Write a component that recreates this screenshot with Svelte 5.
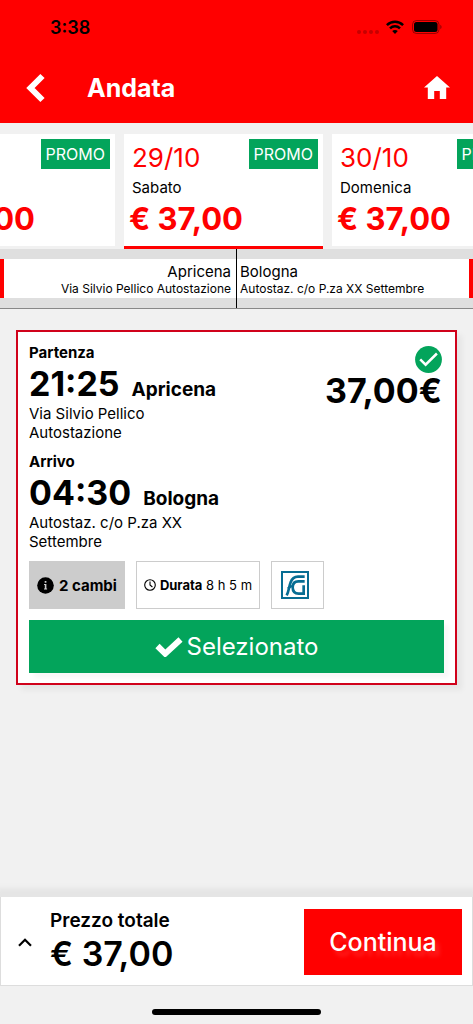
<script>
  import { onMount } from 'svelte';

  const days = [
    { date: '28/10', name: 'Venerdì', price: '€ 37,00' },
    { date: '29/10', name: 'Sabato', price: '€ 37,00', selected: true },
    { date: '30/10', name: 'Domenica', price: '€ 37,00' }
  ];

  const stops = [
    { label: 'Partenza', time: '21:25', city: 'Apricena', address: 'Via Silvio Pellico Autostazione' },
    { label: 'Arrivo', time: '04:30', city: 'Bologna', address: 'Autostaz. c/o P.za XX Settembre' }
  ];

  let strip;

  onMount(() => {
    strip.scrollLeft = 84;
  });
</script>

<div class="page">
  <header>
    <div class="status">
      <span class="clock">3:38</span>
      <svg class="signal" width="22" height="4" viewBox="0 0 22 4" aria-hidden="true">
        <g fill="#000" opacity=".22">
          <circle cx="2" cy="2" r="2" /><circle cx="8" cy="2" r="2" /><circle cx="14" cy="2" r="2" /><circle cx="20" cy="2" r="2" />
        </g>
      </svg>
      <svg class="wifi" width="18" height="14" viewBox="0 0 18 14" aria-hidden="true">
        <g fill="none" stroke="#000" stroke-width="2.5">
          <path d="M.9 5.1C5.5.6 12.5.6 17.1 5.1" />
          <path d="M4 8.3c2.8-2.7 7.2-2.7 10 0" />
        </g>
        <path d="M9 13.9 6.2 11c1.6-1.5 4-1.5 5.6 0z" />
      </svg>
      <svg class="battery" width="30" height="14" viewBox="0 0 30 14" aria-hidden="true">
        <rect x=".5" y=".5" width="26.5" height="13" rx="4" fill="none" stroke="#000" stroke-opacity=".4" />
        <rect x="2" y="2" width="23.5" height="10" rx="2.5" />
        <path d="M28.3 4.8c1.7.7 1.7 3.7 0 4.4z" opacity=".45" />
      </svg>
    </div>
    <div class="bar">
      <button class="icon" aria-label="Indietro">
        <svg width="20" height="30" viewBox="0 0 20 30"><path d="M16.5 3 4.5 15l12 12" fill="none" stroke="#fff" stroke-width="6" /></svg>
      </button>
      <h1>Andata</h1>
      <a class="icon" href="#home" aria-label="Home">
        <svg width="26" height="23" viewBox="0 0 26 23"><path d="M13 0 26 11.6h-3.8V23h-6.4v-8h-5.6v8H3.8V11.6H0z" fill="#fff" /></svg>
      </a>
    </div>
  </header>

  <nav class="days" bind:this={strip} aria-label="Date">
    {#each days as day}
      <button class="day" class:selected={day.selected} aria-pressed={!!day.selected}>
        <span class="dayhead"><span class="date">{day.date}</span><span class="promo">PROMO</span></span>
        <span class="name">{day.name}</span>
        <span class="price">{day.price}</span>
      </button>
    {/each}
  </nav>

  <section class="route">
    <div class="end from"><div><strong>Apricena</strong><span>Via Silvio Pellico Autostazione</span></div></div>
    <div class="end to"><div><strong>Bologna</strong><span>Autostaz. c/o P.za XX Settembre</span></div></div>
  </section>

  <main>
    <article>
      <div class="trip">
        <div class="stops">
          {#each stops as stop}
            <div class="stop">
              <h2>{stop.label}</h2>
              <div class="when"><span class="time">{stop.time}</span><span class="city">{stop.city}</span></div>
              <p>{stop.address}</p>
            </div>
          {/each}
        </div>
        <div class="fare">
          <svg width="27" height="27" viewBox="0 0 27 27" aria-hidden="true">
            <circle cx="13.5" cy="13.5" r="13.4" fill="#03a45b" />
            <path d="m5.2 13.3 5.4 5.4L21.9 7.5" fill="none" stroke="#fff" stroke-width="2.5" />
          </svg>
          <span>37,00€</span>
        </div>
      </div>

      <div class="facts">
        <button class="fact changes">
          <svg width="17" height="17" viewBox="0 0 17 17" aria-hidden="true">
            <circle cx="8.5" cy="8.5" r="8.3" />
            <path d="M7.7 4h1.7v1.7H7.7zM7 7h2.4v4.5h.7v1H7v-1h.8V8H7z" fill="#ccc" />
          </svg>
          2 cambi
        </button>
        <div class="fact duration">
          <svg width="12" height="12" viewBox="0 0 12 12" aria-hidden="true">
            <g fill="none" stroke="#000" stroke-width="1.1"><circle cx="6" cy="6" r="5.3" /><path d="M6 2.6V6l2.4 2" /></g>
          </svg>
          <span><b>Durata</b> 8 h 5 m</span>
        </div>
        <div class="fact carrier">
          <svg width="28" height="28" viewBox="0 0 84 84" role="img" aria-label="FG">
            <g fill="none" stroke="#076d93">
              <rect x="3" y="3" width="78" height="78" stroke-width="6" />
              <path d="M17 73C24 60 24 46 29 34C33 22 41 17 51 17h20" stroke-width="8" />
              <path d="M71 31H52C41 31 35 37 35 49C35 61 42 68 53 68h15V43" stroke-width="8" />
              <path d="M20 52 35 44" stroke-width="6" />
            </g>
          </svg>
        </div>
      </div>

      <button class="chosen">
        <svg width="28" height="20" viewBox="0 0 28 20" aria-hidden="true"><path d="m2.5 9 7.7 7.6L25.5 2.5" fill="none" stroke="#fff" stroke-width="6" /></svg>
        Selezionato
      </button>
    </article>
  </main>

  <footer>
    <div class="total">
      <button class="icon" aria-label="Mostra dettagli">
        <svg width="14" height="9" viewBox="0 0 14 9"><path d="m1 7.8 6-6 6 6" fill="none" stroke="#000" stroke-width="2.2" /></svg>
      </button>
      <div class="sum"><span class="label">Prezzo totale</span><span class="amount">€ 37,00</span></div>
      <button class="continue">Continua</button>
    </div>
    <div class="indicator"></div>
  </footer>
</div>

<style>
  :global(body) { background: #f1f1f1; }
  .page {
    min-height: 100vh;
    display: flex;
    flex-direction: column;
    font-family: Inter, "Liberation Sans", sans-serif;
    color: #000;
  }
  button { border: 0; padding: 0; background: none; font: inherit; color: inherit; }
  svg { display: block; flex: none; }
  h1, h2, p { margin: 0; }

  header { background: #f00; padding-bottom: 2px; }
  .status { display: flex; align-items: center; height: 54px; padding: 0 31px 0 50px; }
  .clock { flex: 1; font-size: 18px; font-weight: 600; }
  .signal { margin: 10px 7px 0 0; }
  .wifi { margin-right: 8px; }
  .bar { display: flex; align-items: center; height: 67px; padding: 0 23px 0 26px; color: #fff; }
  h1 { flex: 1; padding-left: 41px; font-size: 25px; line-height: 30px; font-weight: 700; }

  .days { display: flex; gap: 9px; padding-top: 11px; overflow-x: auto; scrollbar-width: none; }
  .day {
    flex: 0 0 199px;
    box-sizing: border-box;
    display: flex;
    flex-direction: column;
    text-align: left;
    padding: 5px 5px 7px 8px;
    background: linear-gradient(#fff, #fff) padding-box;
    border-bottom: 3px solid transparent;
  }
  .day.selected { border-bottom-color: #f00; }
  .dayhead { display: flex; justify-content: space-between; align-items: flex-start; height: 38px; }
  .date { font-size: 26px; line-height: 38px; color: #f00; }
  .promo { background: #03a45b; color: #fff; font-size: 16px; line-height: 30px; padding: 0 5px; }
  .name { font-size: 15px; line-height: 22px; }
  .price { margin-left: -3px; font-size: 31px; line-height: 40px; font-weight: 700; color: #f00; }

  .route {
    display: flex;
    background: #dfdfdf;
    border-bottom: 1px solid #888;
  }
  .end { flex: 1; padding: 10px 0; }
  .end div {
    display: flex;
    flex-direction: column;
    padding: 3px 5px 2px;
    background: #fff;
  }
  .from div { text-align: right; border-left: 4px solid #f00; }
  .to { border-left: 1px solid #000; }
  .to div { padding-left: 3px; border-right: 4px solid #f00; }
  .end strong { font-size: 15px; line-height: 19px; font-weight: 400; }
  .end span { font-size: 12px; line-height: 15px; }

  main { flex: 1; padding: 21px 16px; }
  article {
    border: 2px solid #d0021b;
    background: #fff;
    padding: 10px 11px;
    box-shadow: 5px 5px 6px rgba(0, 0, 0, .05);
  }
  .trip { display: flex; justify-content: space-between; }
  .stop { margin-bottom: 9px; }
  h2 { font-size: 15px; line-height: 21px; font-weight: 700; }
  .when { display: flex; align-items: baseline; gap: 12px; }
  .time { font-size: 34px; line-height: 41px; font-weight: 700; }
  .city { font-size: 19px; line-height: 20px; font-weight: 700; }
  p { width: 170px; font-size: 15px; line-height: 19px; }
  .fare { display: flex; flex-direction: column; align-items: flex-end; padding: 4px 2px 0 0; }
  .fare span { font-size: 34px; line-height: 36px; font-weight: 700; }

  .facts { display: flex; gap: 11px; margin: 1px 0 11px; }
  .fact {
    box-sizing: border-box;
    display: flex;
    align-items: center;
    height: 48px;
    border: 1px solid #ccc;
    padding: 0 7px;
    font-size: 13px;
    gap: 4px;
    white-space: nowrap;
  }
  .changes { background: #ccc; font-size: 15px; font-weight: 700; gap: 5px; }
  .carrier { padding: 0 14px 0 9px; }

  .chosen {
    display: flex;
    align-items: center;
    justify-content: center;
    gap: 4px;
    width: 100%;
    height: 53px;
    background: #03a45b;
    color: #fff;
    font-size: 24px;
    box-shadow: 5px 5px 4px rgba(0, 0, 0, .03);
  }

  .total {
    display: flex;
    align-items: center;
    padding: 12px 10px 10px 17px;
    background: #fff;
    border: 1px solid #ddd;
    border-width: 0 1px 1px;
    box-shadow: 0 -5px 5px 4px #e5e5e5;
    clip-path: inset(-14px 0 0);
  }
  .sum { flex: 1; display: flex; flex-direction: column; padding-left: 18px; }
  .label { font-size: 19px; line-height: 24px; font-weight: 600; }
  .amount { font-size: 34px; line-height: 42px; font-weight: 600; }
  .continue {
    width: 158px;
    height: 66px;
    background: #f00;
    color: #fff;
    font-size: 25px;
    font-weight: 500;
    text-shadow: 4px 5px 4px rgba(255, 255, 255, .15);
  }
  .indicator { width: 169px; height: 6px; margin: 23px auto 9px; border-radius: 3px; background: #000; }
</style>
